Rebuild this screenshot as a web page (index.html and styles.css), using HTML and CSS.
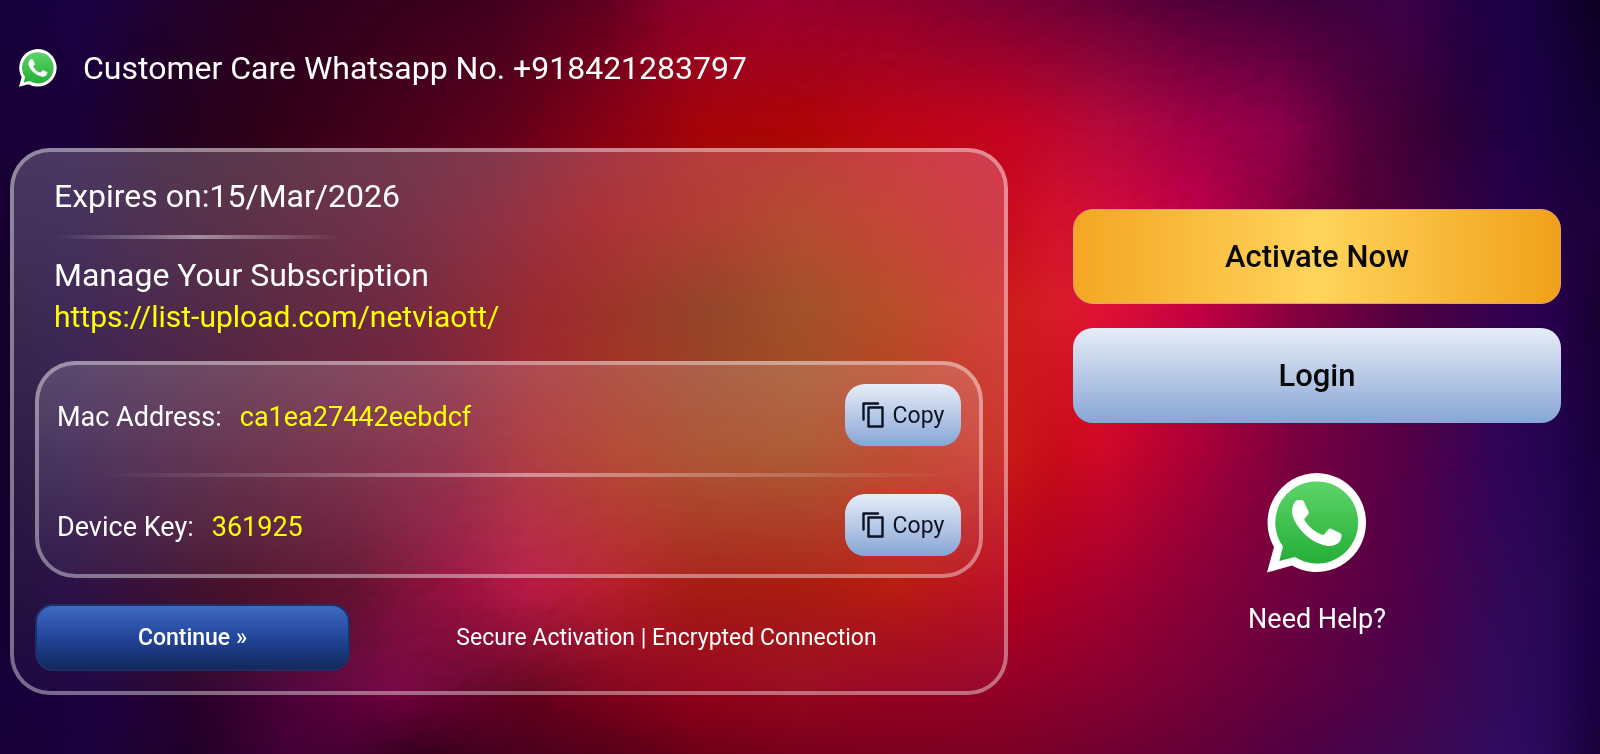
FILE: index.html
```html
<!DOCTYPE html>
<html lang="en">
<head>
<meta charset="utf-8">
<title>Activation</title>
<meta name="viewport" content="width=device-width, initial-scale=1">
<link rel="stylesheet" href="styles.css">
</head>
<body>
<svg class="defs" aria-hidden="true">
  <defs>
    <linearGradient id="wa-green" x1="0" y1="0" x2="0" y2="1">
      <stop offset="0" stop-color="#5dd468"/>
      <stop offset="1" stop-color="#25ae38"/>
    </linearGradient>
    <symbol id="whatsapp" viewBox="0 0 100 100">
      <path fill="#fff" d="M50 0A49.5 49.5 0 1 1 25 92.500L0 99.500L7 74A49.500 49.500 0 0 1 50 0Z"/>
      <path fill="url(#wa-green)" d="M50 8.500A41 41 0 1 1 28 84L12.300 88L16 73.500A41 41 0 0 1 50 8.500Z"/>
      <path fill="#fff" d="M31 27H34.500Q36.300 27 37 28.800L41.500 38.500Q42.200 40 41 41.500L37.800 45.300Q37 46.400 37.800 47.700Q44.500 58 55 61.700Q56.500 62.200 57.500 61L61.500 56.200Q62.500 55 64 55.700L73 60Q74.700 60.800 74.600 62.500Q74.300 68.500 70 71Q65.500 73.600 61 73Q48 71 38 61.500Q28 51.500 25.500 42.500Q23.800 33.500 28 28.700Q29.400 27 31 27Z"/>
    </symbol>
    <symbol id="copy" viewBox="0 0 22 26">
      <path fill="none" stroke="#0b1226" stroke-width="2.400" stroke-linecap="round" stroke-linejoin="round" d="M1.500 17.500V1.500H16M6.500 5.500H20.500V24.500H6.500Z"/>
    </symbol>
  </defs>
</svg>

<div class="backdrop" aria-hidden="true">
  <div class="band band-1"></div>
  <div class="band band-2"></div>
  <div class="band band-3"></div>
  <div class="band band-4"></div>
  <div class="band band-5"></div>
  <div class="band band-6"></div>
  <div class="band band-7"></div>
  <div class="band band-8"></div>
  <svg class="ripple">
    <filter id="ripple" x="0" y="0" width="100%" height="100%">
      <feTurbulence type="fractalNoise" baseFrequency="0.06 0.07" numOctaves="2" seed="4"/>
      <feDiffuseLighting surfaceScale="3" lighting-color="#fff"><feDistantLight azimuth="240" elevation="30"/></feDiffuseLighting>
    </filter>
    <rect width="100%" height="100%" filter="url(#ripple)"/>
  </svg>
</div>

<div class="page">
  <header class="care">
    <svg class="care-icon" role="img" aria-label="WhatsApp"><use href="#whatsapp"/></svg>
    <h1 class="care-text">Customer Care Whatsapp No. +918421283797</h1>
  </header>

  <main class="content">
    <section class="panel">
      <div class="intro">
        <p class="line">Expires on:15/Mar/2026</p>
        <div class="rule rule-short"></div>
        <h2 class="line">Manage Your Subscription</h2>
        <a class="link" href="https://list-upload.com/netviaott/">https://list-upload.com/netviaott/</a>
      </div>

      <div class="device">
        <div class="field">
          <span class="label">Mac Address:</span>
          <span class="value">ca1ea27442eebdcf</span>
          <button class="copy" type="button"><svg class="copy-icon" aria-hidden="true"><use href="#copy"/></svg>Copy</button>
        </div>
        <div class="rule rule-long"></div>
        <div class="field">
          <span class="label">Device Key:</span>
          <span class="value">361925</span>
          <button class="copy" type="button"><svg class="copy-icon" aria-hidden="true"><use href="#copy"/></svg>Copy</button>
        </div>
      </div>

      <div class="foot">
        <button class="continue" type="button">Continue »</button>
        <p class="secure">Secure Activation | Encrypted Connection</p>
      </div>
    </section>

    <aside class="actions">
      <button class="action activate" type="button">Activate Now</button>
      <button class="action login" type="button">Login</button>
      <a class="help" href="#help">
        <svg class="help-icon" aria-hidden="true"><use href="#whatsapp"/></svg>
        Need Help?
      </a>
    </aside>
  </main>
</div>
</body>
</html>
```
FILE: styles.css
```css
* { box-sizing: border-box; }

body {
  margin: 0;
  min-height: 100vh;
  background: #1a0030;
  color: #fff;
  font-family: Roboto, "Liberation Sans", sans-serif;
}

h1, h2, p { margin: 0; font-weight: 400; }

button {
  font-family: inherit;
  border: 0;
  cursor: pointer;
}

.defs { position: absolute; width: 0; height: 0; }

/* Backdrop: horizontal colour bands that fade into one another downwards */
.backdrop { position: fixed; inset: 0; z-index: -1; overflow: hidden; }
.band { position: absolute; inset: 0; }

.band-1 {
  background: linear-gradient(90deg, #16003a 0%, #1a0044 5%, #200030 10%, #280020 16%, #38001c 25%, #40001e 31%, #60001f 38%, #850028 42%, #96002a 48%, #8c0028 56%, #780030 63%, #640034 69%, #4a0036 75%, #3c0038 82%, #3c0048 88%, #220044 92%, #1c0048 95%, #0c0020 100%);
}
.band-2 {
  background: linear-gradient(90deg, #180038 0%, #1b0038 5%, #200020 10%, #2e0018 16%, #48001a 25%, #5c001c 31%, #880014 38%, #a60408 44%, #ac0406 50%, #bc0414 56%, #c40420 63%, #b40838 69%, #9c0040 75%, #880044 80%, #500038 85%, #3c0034 88%, #2c0038 91%, #1e0048 95%, #120034 100%);
  mask-image: linear-gradient(180deg, transparent 0%, #000 17%);
}
.band-3 {
  background: linear-gradient(90deg, #150030 0%, #180038 4%, #32001e 14%, #54001e 25%, #74001a 31%, #960008 37%, #a00e04 43%, #a42000 50%, #b81808 56%, #c80b1d 63%, #d2102a 66%, #d00838 70%, #bc0044 75%, #780038 81%, #540034 85%, #40003c 89%, #28004a 94%, #1c0038 100%);
  mask-image: linear-gradient(180deg, transparent 17%, #000 29%);
}
.band-4 {
  background: linear-gradient(90deg, #14002c 0%, #1a0038 4%, #3a0020 16%, #56001e 25%, #8a0008 34%, #8a1000 39%, #802000 44%, #903000 50%, #aa2c00 56%, #c42012 61%, #d81c28 66%, #e01034 69%, #c00040 75%, #84003c 81%, #500040 88%, #340050 94%, #28004c 97%, #180030 100%);
  mask-image: linear-gradient(180deg, transparent 29%, #000 41%);
}
.band-5 {
  background: linear-gradient(90deg, #14002c 0%, #1c0038 4%, #400024 14%, #5c0020 22%, #740020 28%, #980a10 33%, #a01c00 39%, #982a00 44%, #983000 50%, #b02000 56%, #c81a16 63%, #c80c18 66%, #d00828 69%, #a80038 75%, #780040 81%, #540048 88%, #2e0458 94%, #240450 97%, #18003c 100%);
  mask-image: linear-gradient(180deg, transparent 41%, #000 60%);
}
.band-6 {
  background: linear-gradient(90deg, #150030 0%, #1c003a 4%, #3a001c 14%, #54001e 22%, #8a002c 28%, #b00834 33%, #b00c1c 38%, #a00c04 43%, #a40c00 50%, #b40c00 56%, #b80018 62%, #a40030 69%, #880038 75%, #6c0040 81%, #500048 88%, #300858 94%, #280854 97%, #1c0044 100%);
  mask-image: linear-gradient(180deg, transparent 60%, #000 78%);
}
.band-7 {
  background: linear-gradient(90deg, #16003a 0%, #1c0040 6%, #28002a 12%, #500038 19%, #74003c 25%, #640028 29%, #600018 33%, #800018 38%, #940018 44%, #98081c 50%, #980020 56%, #940028 63%, #880030 69%, #740038 75%, #600040 81%, #48044c 88%, #300a5c 94%, #280858 97%, #1a0040 100%);
  mask-image: linear-gradient(180deg, transparent 78%, #000 91%);
}
.band-8 {
  background: linear-gradient(90deg, #180038 0%, #1c003c 6%, #200028 12%, #440036 18%, #440030 22%, #34001c 26%, #44001c 31%, #540018 38%, #700018 44%, #78001c 50%, #7c0020 56%, #7c0024 63%, #700030 69%, #640038 75%, #500044 81%, #400850 88%, #300c60 94%, #280858 97%, #180038 100%);
  mask-image: linear-gradient(180deg, transparent 91%, #000 100%);
}

/* Glass ripples run in a diagonal belt */
.ripple {
  position: absolute;
  width: 100%;
  height: 100%;
  mix-blend-mode: soft-light;
  opacity: 0.2;
  mask-image:
    radial-gradient(ellipse 16% 36% at 76% 20%, #000 20%, transparent),
    radial-gradient(ellipse 22% 18% at 52% 2%, #000 20%, transparent),
    radial-gradient(ellipse 16% 34% at 30% 80%, #000 20%, transparent);
}

.page { padding: 40px 39px 40px 10px; }

.care {
  display: flex;
  align-items: center;
  gap: 26px;
  height: 56px;
  padding-left: 9px;
}
.care-icon { width: 38px; height: 38px; }
.care-text { font-size: 32px; line-height: 40px; }

.content {
  display: grid;
  grid-template-columns: 998fr 488fr;
  gap: 65px;
  align-items: center;
  margin-top: 52px;
}

.panel {
  padding: 24px 21px 20px;
  border: 4px solid rgba(255, 255, 255, 0.4);
  border-radius: 40px;
  background: linear-gradient(180deg, rgba(255, 255, 255, 0.22), rgba(255, 255, 255, 0.03)) border-box;
}

.intro { padding: 0 19px; }
.line { font-size: 32px; line-height: 40px; }
.link {
  display: block;
  margin-top: 2px;
  color: #ff0;
  font-size: 30px;
  line-height: 40px;
  text-decoration: none;
}

.rule {
  height: 4px;
  background: linear-gradient(90deg, transparent, rgba(255, 255, 255, 0.45), transparent);
}
.rule-short { width: 288px; max-width: 100%; margin: 19px 0 16px; }
.rule-long { margin: 27px 0 17px 40px; }

.device {
  margin-top: 24px;
  padding: 19px 18px 18px;
  border: 4px solid rgba(255, 255, 255, 0.4);
  border-radius: 40px;
  background: linear-gradient(180deg, rgba(255, 255, 255, 0.17), rgba(255, 255, 255, 0.04)) border-box;
}
.field {
  display: flex;
  align-items: center;
  gap: 18px;
  font-size: 27px;
  line-height: 32px;
}
.value { color: #ff0; }
.label, .value { padding-top: 4px; }

.copy {
  display: flex;
  align-items: center;
  justify-content: center;
  gap: 9px;
  width: 116px;
  height: 62px;
  margin-left: auto;
  border-radius: 20px;
  background: linear-gradient(180deg, #e6edf7, #b8c9e6 50%, #86a6d6);
  color: #0b1226;
  font-size: 23px;
}
.copy-icon { width: 22px; height: 26px; }

.foot { display: flex; align-items: center; margin-top: 26px; }
.continue {
  width: 315px;
  height: 67px;
  border: 2px solid #1d2f66;
  border-radius: 18px;
  background: linear-gradient(180deg, #3f69c2, #22469a 50%, #14285c);
  color: #fff;
  font-size: 23px;
  font-weight: 500;
}
.secure { flex: 1; font-size: 23px; line-height: 32px; text-align: center; }

.actions { display: flex; flex-direction: column; gap: 24px; }
.action {
  height: 95px;
  border-radius: 20px;
  color: #080808;
  font-size: 31px;
  font-weight: 500;
}
.activate {
  border: 1px solid #e0a070;
  background: linear-gradient(90deg, #f4a624, #ffd45c 50%, #f1a01a);
}
.login { background: linear-gradient(180deg, #e6edf7, #b8c9e6 50%, #86a6d6); }

.help {
  display: flex;
  flex-direction: column;
  align-items: center;
  gap: 30px;
  margin: 26px auto 0;
  color: #fff;
  font-size: 27px;
  line-height: 32px;
  text-decoration: none;
}
.help-icon { width: 100px; height: 100px; }
```
